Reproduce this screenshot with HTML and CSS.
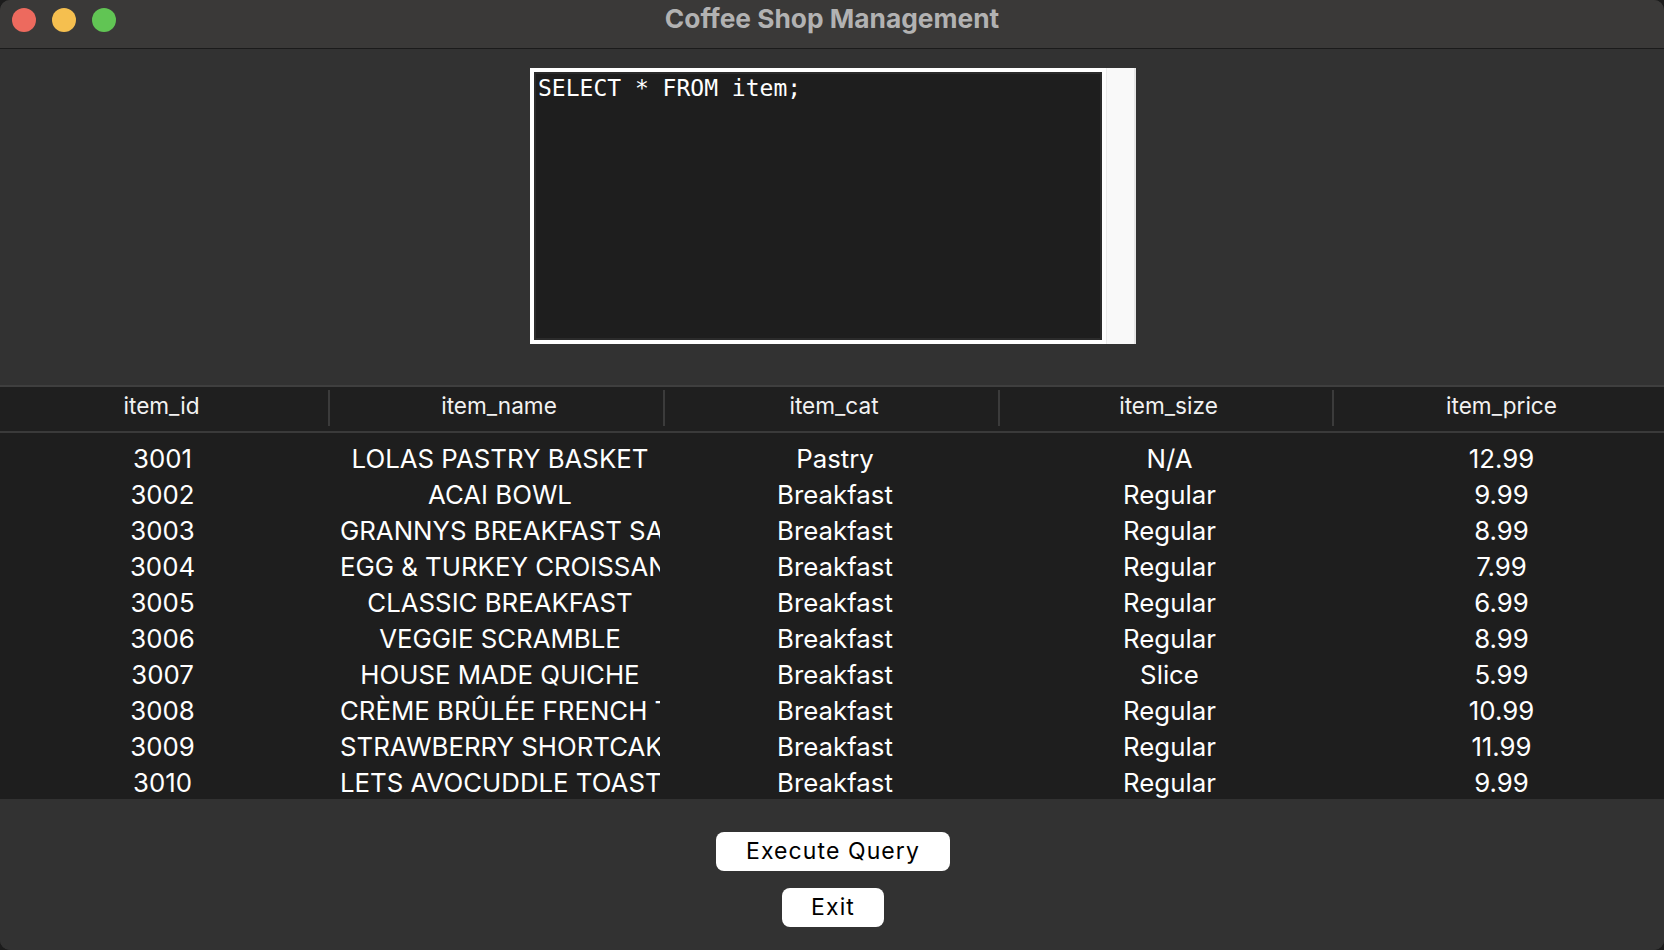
FILE: index.html
```html
<!DOCTYPE html>
<html lang="en">
<head>
<meta charset="utf-8">
<title>Coffee Shop Management</title>
<link rel="stylesheet" href="styles.css">
</head>
<body>
<div class="window">
  <header class="titlebar">
    <div class="lights">
      <span class="light red"></span>
      <span class="light yellow"></span>
      <span class="light green"></span>
    </div>
    <div class="title">Coffee Shop Management</div>
    <div></div>
  </header>

  <section class="editor-area">
    <div class="editor-frame">
      <div class="editor">SELECT * FROM item;</div>
      <div class="scrollbar"></div>
    </div>
  </section>

  <section class="table">
    <div class="thead">
      <div class="th">item_id</div>
      <div class="th">item_name</div>
      <div class="th">item_cat</div>
      <div class="th">item_size</div>
      <div class="th">item_price</div>
    </div>
    <div class="tbody">
      <div class="tr"><div class="td">3001</div><div class="td">LOLAS PASTRY BASKET</div><div class="td">Pastry</div><div class="td">N/A</div><div class="td">12.99</div></div>
      <div class="tr"><div class="td">3002</div><div class="td">ACAI BOWL</div><div class="td">Breakfast</div><div class="td">Regular</div><div class="td">9.99</div></div>
      <div class="tr"><div class="td">3003</div><div class="td">GRANNYS BREAKFAST SANDWICH</div><div class="td">Breakfast</div><div class="td">Regular</div><div class="td">8.99</div></div>
      <div class="tr"><div class="td">3004</div><div class="td">EGG &amp; TURKEY CROISSANT</div><div class="td">Breakfast</div><div class="td">Regular</div><div class="td">7.99</div></div>
      <div class="tr"><div class="td">3005</div><div class="td">CLASSIC BREAKFAST</div><div class="td">Breakfast</div><div class="td">Regular</div><div class="td">6.99</div></div>
      <div class="tr"><div class="td">3006</div><div class="td">VEGGIE SCRAMBLE</div><div class="td">Breakfast</div><div class="td">Regular</div><div class="td">8.99</div></div>
      <div class="tr"><div class="td">3007</div><div class="td">HOUSE MADE QUICHE</div><div class="td">Breakfast</div><div class="td">Slice</div><div class="td">5.99</div></div>
      <div class="tr"><div class="td">3008</div><div class="td">CRÈME BRÛLÉE FRENCH TOAST</div><div class="td">Breakfast</div><div class="td">Regular</div><div class="td">10.99</div></div>
      <div class="tr"><div class="td">3009</div><div class="td">STRAWBERRY SHORTCAKE</div><div class="td">Breakfast</div><div class="td">Regular</div><div class="td">11.99</div></div>
      <div class="tr"><div class="td">3010</div><div class="td">LETS AVOCUDDLE TOAST</div><div class="td">Breakfast</div><div class="td">Regular</div><div class="td">9.99</div></div>
    </div>
  </section>

  <section class="actions">
    <button class="btn btn-exec" type="button">Execute Query</button>
    <button class="btn btn-exit" type="button">Exit</button>
  </section>
</div>
</body>
</html>
```
FILE: styles.css
```css
* { box-sizing: border-box; }

html, body {
  margin: 0;
  padding: 0;
  background: #1c1c1c;
}

body {
  width: 1664px;
  height: 950px;
  overflow: hidden;
  font-family: Inter, "Liberation Sans", sans-serif;
}

.window {
  width: 1664px;
  height: 950px;
  background: #323232;
  border-radius: 10px;
  overflow: hidden;
  display: flex;
  flex-direction: column;
}

/* Title bar */
.titlebar {
  height: 49px;
  flex: none;
  background: #3a3938;
  border-bottom: 1px solid #1b1b1b;
  display: grid;
  grid-template-columns: 1fr auto 1fr;
  align-items: start;
}

.lights {
  display: flex;
  gap: 16px;
  padding: 8px 0 0 12px;
}

.light {
  width: 24px;
  height: 24px;
  border-radius: 50%;
  display: block;
}
.red { background: #ed6a5e; }
.yellow { background: #f5bf4f; }
.green { background: #61c554; }

.title {
  font-family: Inter, "Liberation Sans", sans-serif;
  font-weight: 700;
  font-size: 26.3px;
  line-height: 38px;
  color: #b2b2b2;
}

/* Editor */
.editor-area {
  flex: none;
  display: flex;
  justify-content: center;
  padding: 19px 0 41px 0;
}

.editor-frame {
  width: 606px;
  height: 276px;
  background: #ffffff;
  display: flex;
  padding: 4px 0 4px 4px;
  margin-left: 2px;
}

.editor {
  width: 568px;
  height: 268px;
  background: #1e1e1e;
  border: 2px solid #2b2b2b;
  padding: 1px 0 0 2px;
  color: #ffffff;
  font-family: "DejaVu Sans Mono", "Liberation Mono", monospace;
  font-size: 23px;
  white-space: pre;
}

.scrollbar {
  width: 30px;
  margin: -4px 0 -4px 4px;
  background: #f9f9f9;
  border-left: 1px solid #ebebeb;
  border-right: 2px solid #e6e6e6;
}

/* Table */
.table {
  flex: none;
  border-top: 2px solid #3f3f3f;
  background: #1e1e1e;
  color: #ffffff;
}

.thead,
.tr {
  display: grid;
  grid-template-columns: 330px 335px 335px 334px 330px;
}

.thead {
  height: 46px;
  padding: 3px 0 5px 0;
  background: #1f1f1f;
  border-bottom: 2px solid #3a3a3a;
}

.th {
  height: 36px;
  padding: 0 5px 4px 10px;
  font-size: 22.6px;
  line-height: 32px;
  text-align: center;
  color: #f2f2f2;
  border-right: 2px solid #3b3b3b;
  white-space: nowrap;
  overflow: hidden;
}
.th:first-child { padding-left: 0; }
.th:last-child { border-right: none; }

.tbody {
  height: 366px;
  padding-top: 8px;
  overflow: hidden;
  background: #1e1e1e;
}

.tr { height: 36px; }

.td {
  padding: 0 0 0 10px;
  margin-right: 5px;
  font-size: 25.8px;
  line-height: 36px;
  text-align: center;
  white-space: nowrap;
  overflow: hidden;
}
.td:first-child { padding-left: 0; }

/* Buttons */
.actions {
  flex: 1;
  display: flex;
  flex-direction: column;
  align-items: center;
  gap: 17px;
  padding: 33px 0 0 2px;
  background: #323232;
}

.btn {
  height: 39px;
  background: #ffffff;
  color: #000000;
  border: none;
  border-radius: 8px;
  font-family: Inter, "Liberation Sans", sans-serif;
  font-size: 23px;
  letter-spacing: 1.1px;
  padding: 0;
  line-height: 39px;
}
.btn-exec { width: 234px; }
.btn-exit { width: 102px; }
```
